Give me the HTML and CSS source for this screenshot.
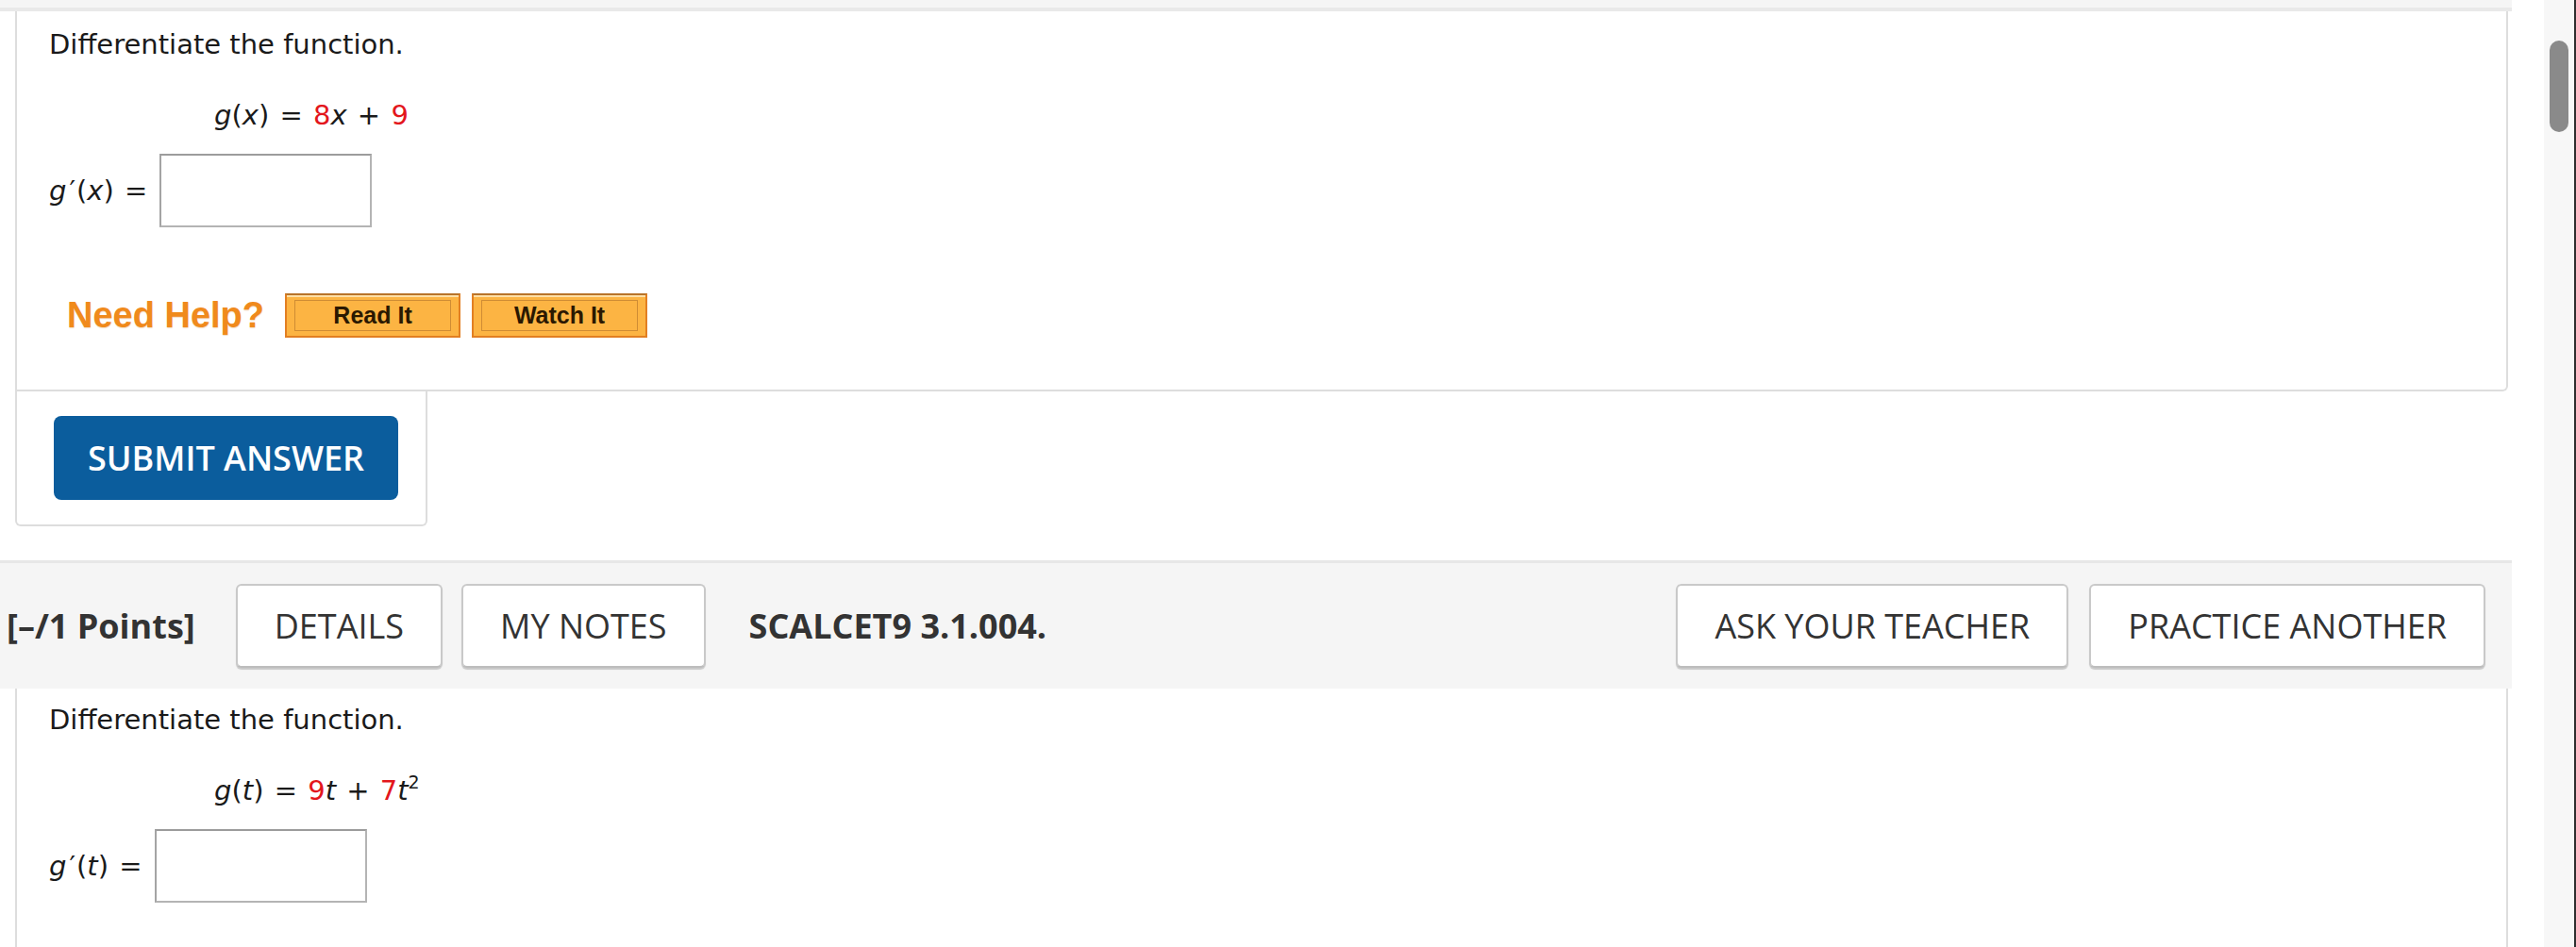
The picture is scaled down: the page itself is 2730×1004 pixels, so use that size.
FILE: index.html
```html
<!DOCTYPE html>
<html lang="en">
<head>
<meta charset="utf-8">
<title>Differentiate the function</title>
<link rel="stylesheet" href="styles.css">
</head>
<body>
<div class="window">
  <main class="page">
    <div class="prev-strip"></div>

    <section class="question q1">
      <p class="prompt">Differentiate the function.</p>
      <p class="formula"><i>g</i>(<i>x</i>) <span class="op">=</span> <span class="coef">8</span><i>x</i> <span class="op">+</span> <span class="coef">9</span></p>
      <div class="answer-row">
        <span class="answer-label"><i>g</i><span class="prime">′</span>(<i>x</i>) <span class="op">=</span></span>
        <span class="answer-box"></span>
      </div>
      <div class="help-row">
        <span class="need-help">Need Help?</span>
        <span class="help-btn"><span class="help-btn-inner">Read It</span></span>
        <span class="help-btn"><span class="help-btn-inner">Watch It</span></span>
      </div>
    </section>

    <div class="submit-box">
      <button class="submit" type="button">SUBMIT ANSWER</button>
    </div>

    <header class="qheader">
      <span class="points">[–/1 Points]</span>
      <span class="hbtn details">DETAILS</span>
      <span class="hbtn notes">MY NOTES</span>
      <span class="code">SCALCET9 3.1.004.</span>
      <span class="spacer"></span>
      <span class="hbtn ask">ASK YOUR TEACHER</span>
      <span class="hbtn">PRACTICE ANOTHER</span>
    </header>

    <section class="question q2">
      <p class="prompt">Differentiate the function.</p>
      <p class="formula"><i>g</i>(<i>t</i>) <span class="op">=</span> <span class="coef">9</span><i>t</i> <span class="op">+</span> <span class="coef">7</span><i>t</i><sup class="exp">2</sup></p>
      <div class="answer-row">
        <span class="answer-label"><i>g</i><span class="prime">′</span>(<i>t</i>) <span class="op">=</span></span>
        <span class="answer-box"></span>
      </div>
    </section>
  </main>

  <aside class="scroll-col">
    <div class="scroll-gap"></div>
    <div class="scroll-track"><div class="scroll-thumb"></div></div>
  </aside>
</div>
</body>
</html>
```

FILE: styles.css
```css
* { box-sizing: border-box; }

html, body {
  margin: 0;
  padding: 0;
  background: #ffffff;
}

body {
  width: 2730px;
  height: 1004px;
  overflow: hidden;
}

.window {
  display: flex;
  height: 1004px;
}

.page {
  width: 2662px;
  flex: none;
  display: flex;
  flex-direction: column;
}

.prev-strip {
  height: 12px;
  background: #f5f5f5;
  border-bottom: 4px solid #e9e9e9;
}

/* question cards */
.question {
  margin-left: 16px;
  width: 2642px;
  border-left: 2px solid #dddddd;
  border-right: 2px solid #dddddd;
  font-family: "DejaVu Sans", Verdana, sans-serif;
  font-size: 29px;
  color: #1a1a1a;
}

.q1 {
  border-bottom: 2px solid #dddddd;
  border-bottom-right-radius: 6px;
  padding: 19px 0 55px 34px;
}

.q2 {
  flex: 1;
  padding: 17px 0 0 34px;
}

.prompt {
  margin: 0;
  line-height: 33px;
}

.formula {
  margin: 42px 0 0 175px;
  line-height: 33px;
  white-space: pre;
}

.op { padding: 0 2px; }

.coef { color: #e3161c; }

.exp {
  font-size: 19px;
  vertical-align: 12px;
  line-height: 0;
}

.answer-row {
  margin-top: 24px;
  display: flex;
  align-items: center;
  gap: 11px;
}

.answer-label {
  line-height: 33px;
  white-space: pre;
}

.prime {
  padding: 0 1px 0 3px;
}

.answer-box {
  width: 225px;
  height: 78px;
  border: 2px solid #b4b4b4;
  border-top-color: #9c9c9c;
  border-left-color: #a4a4a4;
  background: #ffffff;
}

/* help row */
.help-row {
  margin-top: 70px;
  padding-left: 19px;
  display: flex;
  align-items: center;
  height: 47px;
}

.need-help {
  font-family: "Liberation Sans", Arial, sans-serif;
  font-weight: bold;
  font-size: 38px;
  color: #f08a1c;
  text-shadow: 0 1px 1px rgba(200, 110, 0, 0.25);
  margin-right: 22px;
}

.help-btn {
  width: 186px;
  height: 47px;
  margin-right: 12px;
  display: flex;
  padding: 5px 8px;
  background: #fcb443;
  border: 2px solid #e27f22;
  border-top-color: #b8742a;
  box-shadow: inset 0 2px 0 #ffe0a6;
}

.help-btn-inner {
  flex: 1;
  display: flex;
  align-items: center;
  justify-content: center;
  border: 1px solid #cf8c34;
  font-family: "Liberation Sans", Arial, sans-serif;
  font-weight: bold;
  font-size: 25px;
  color: #2a1800;
}

/* submit box */
.submit-box {
  margin-left: 16px;
  width: 437px;
  border: 2px solid #dddddd;
  border-top: none;
  border-radius: 0 0 6px 6px;
  padding: 26px 29px 26px 39px;
}

.submit {
  display: block;
  width: 365px;
  height: 89px;
  border: none;
  border-radius: 8px;
  background: #0b5d9d;
  color: #ffffff;
  font-family: "Open Sans", "Noto Sans", sans-serif;
  font-weight: 600;
  font-size: 36px;
  padding: 0;
}

/* question header */
.qheader {
  margin-top: 36px;
  height: 136px;
  border-top: 3px solid #e7e7e7;
  background: #f5f5f5;
  display: flex;
  align-items: center;
  padding: 0 28px 0 7px;
  font-family: "Open Sans", "Noto Sans", sans-serif;
  font-size: 36px;
  color: #333333;
}

.points {
  font-weight: bold;
  margin-right: 43px;
}

.hbtn {
  height: 89px;
  padding: 0 39px;
  display: flex;
  align-items: center;
  background: #ffffff;
  border: 2px solid #c9c9c9;
  border-bottom-color: #bdbdbd;
  border-radius: 6px;
  box-shadow: 0 2px 1px rgba(0, 0, 0, 0.18);
  white-space: nowrap;
}

.details { margin-right: 20px; }
.notes { margin-right: 46px; }
.ask { margin-right: 22px; }

.code {
  font-weight: bold;
  white-space: nowrap;
}

.spacer { flex: 1; }

/* fake scrollbar */
.scroll-col {
  flex: 1;
  display: flex;
}

.scroll-gap {
  width: 34px;
  background: #ffffff;
}

.scroll-track {
  flex: 1;
  background: #f7f7f7;
  border-right: 2px solid #2e2e2e;
  padding: 43px 0 0 6px;
}

.scroll-thumb {
  width: 20px;
  height: 97px;
  border-radius: 10px;
  background: #8a8a8a;
}
```
